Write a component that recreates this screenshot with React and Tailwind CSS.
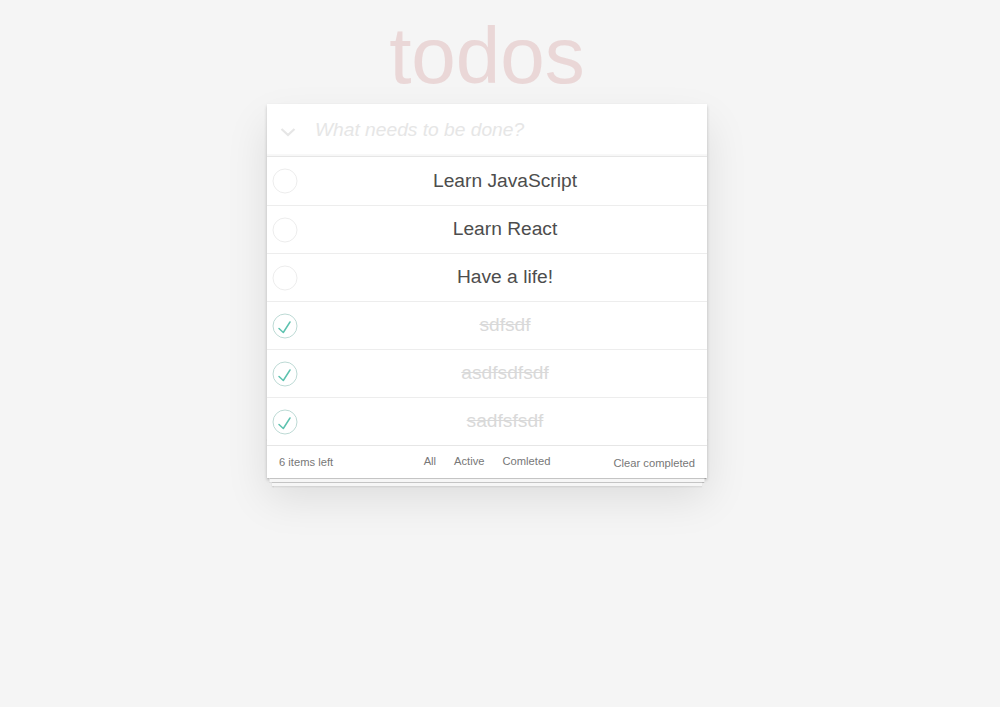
import { useState } from 'react';

const initialTodos = [
  { id: 1, title: 'Learn JavaScript', completed: false },
  { id: 2, title: 'Learn React', completed: false },
  { id: 3, title: 'Have a life!', completed: false },
  { id: 4, title: 'sdfsdf', completed: true },
  { id: 5, title: 'asdfsdfsdf', completed: true },
  { id: 6, title: 'sadfsfsdf', completed: true },
];

function Toggle({ checked }) {
  return (
    <svg width="32" height="32" viewBox="0 0 32 32" className="shrink-0">
      <circle cx="16" cy="16" r="12" fill="none" stroke={checked ? '#bddad5' : '#ededed'} strokeWidth="1" />
      {checked && (
        <polyline points="10,18.5 14.3,22.5 21,12" fill="none" stroke="#5dc2af" strokeWidth="1.5" strokeLinecap="round" strokeLinejoin="round" />
      )}
    </svg>
  );
}

export default function App() {
  const [todos] = useState(initialTodos);
  const left = 6;

  return (
    <div className="min-h-screen bg-[#f5f5f5] font-['Liberation_Sans',Arial,sans-serif] text-[#4d4d4d]">
      <div className="w-[440px] ml-[267px]">
        <h1 className="text-[80px] leading-[80px] pt-[16px] pb-[8px] text-center text-[#ead7d7] font-thin">todos</h1>

        <div className="relative bg-white shadow-[0_1.6px_3.2px_0_rgba(0,0,0,0.2),0_20px_40px_0_rgba(0,0,0,0.1)]">
          <div className="h-[53px] flex items-center border-b border-[#e6e6e6] shadow-[inset_0_-2px_1px_rgba(0,0,0,0.03)]">
            <div className="w-[48px] flex justify-start pl-[13px] pt-[4px]">
              <svg width="16" height="10" viewBox="0 0 16 10">
                <polyline points="1.5,2 8,8 14.5,2" fill="none" stroke="#e6e6e6" strokeWidth="2.2" />
              </svg>
            </div>
            <span className="italic text-[19.2px] text-[#e6e6e6]">What needs to be done?</span>
          </div>

          <ul>
            {todos.map((todo, i) => {
              const last = i === todos.length - 1;
              const h = i === 0 ? 'h-[49px]' : last ? 'h-[47px]' : 'h-[48px]';
              return (
                <li
                  key={todo.id}
                  className={`relative ${h} flex items-center ${last ? '' : 'border-b border-[#ededed]'}`}
                >
                  <div className="pl-[2px]">
                    <Toggle checked={todo.completed} />
                  </div>
                  <span
                    className={`flex-1 text-center text-[19.2px] pl-[50px] pr-[48px] ${
                      todo.completed ? 'text-[#d9d9d9] line-through' : 'text-[#4d4d4d]'
                    }`}
                  >
                    {todo.title}
                  </span>
                </li>
              );
            })}
          </ul>

          <div className="relative h-[33px] px-[12px] border-t border-[#e6e6e6] text-[11.2px] text-[#777] grid grid-cols-[1fr_auto_1fr] items-center">
            <div className="absolute left-0 right-0 bottom-0 h-[40px] overflow-hidden shadow-[0_0.8px_0.8px_rgba(0,0,0,0.2),0_6.4px_0_-2.4px_#f6f6f6,0_7.2px_0.8px_-2.4px_rgba(0,0,0,0.2),0_12.8px_0_-4.8px_#f6f6f6,0_13.6px_1.6px_-4.8px_rgba(0,0,0,0.2)]" />
            <span className="justify-self-start">{left} items left</span>
            <ul className="flex -mt-[2px]">
              {['All', 'Active', 'Comleted'].map((f) => (
                <li key={f} className="mx-[2.4px] px-[5.6px] py-[2.4px] border border-transparent rounded-[3px]">
                  {f}
                </li>
              ))}
            </ul>
            <span className="justify-self-end mt-[2px]">Clear completed</span>
          </div>
        </div>
      </div>
    </div>
  );
}
